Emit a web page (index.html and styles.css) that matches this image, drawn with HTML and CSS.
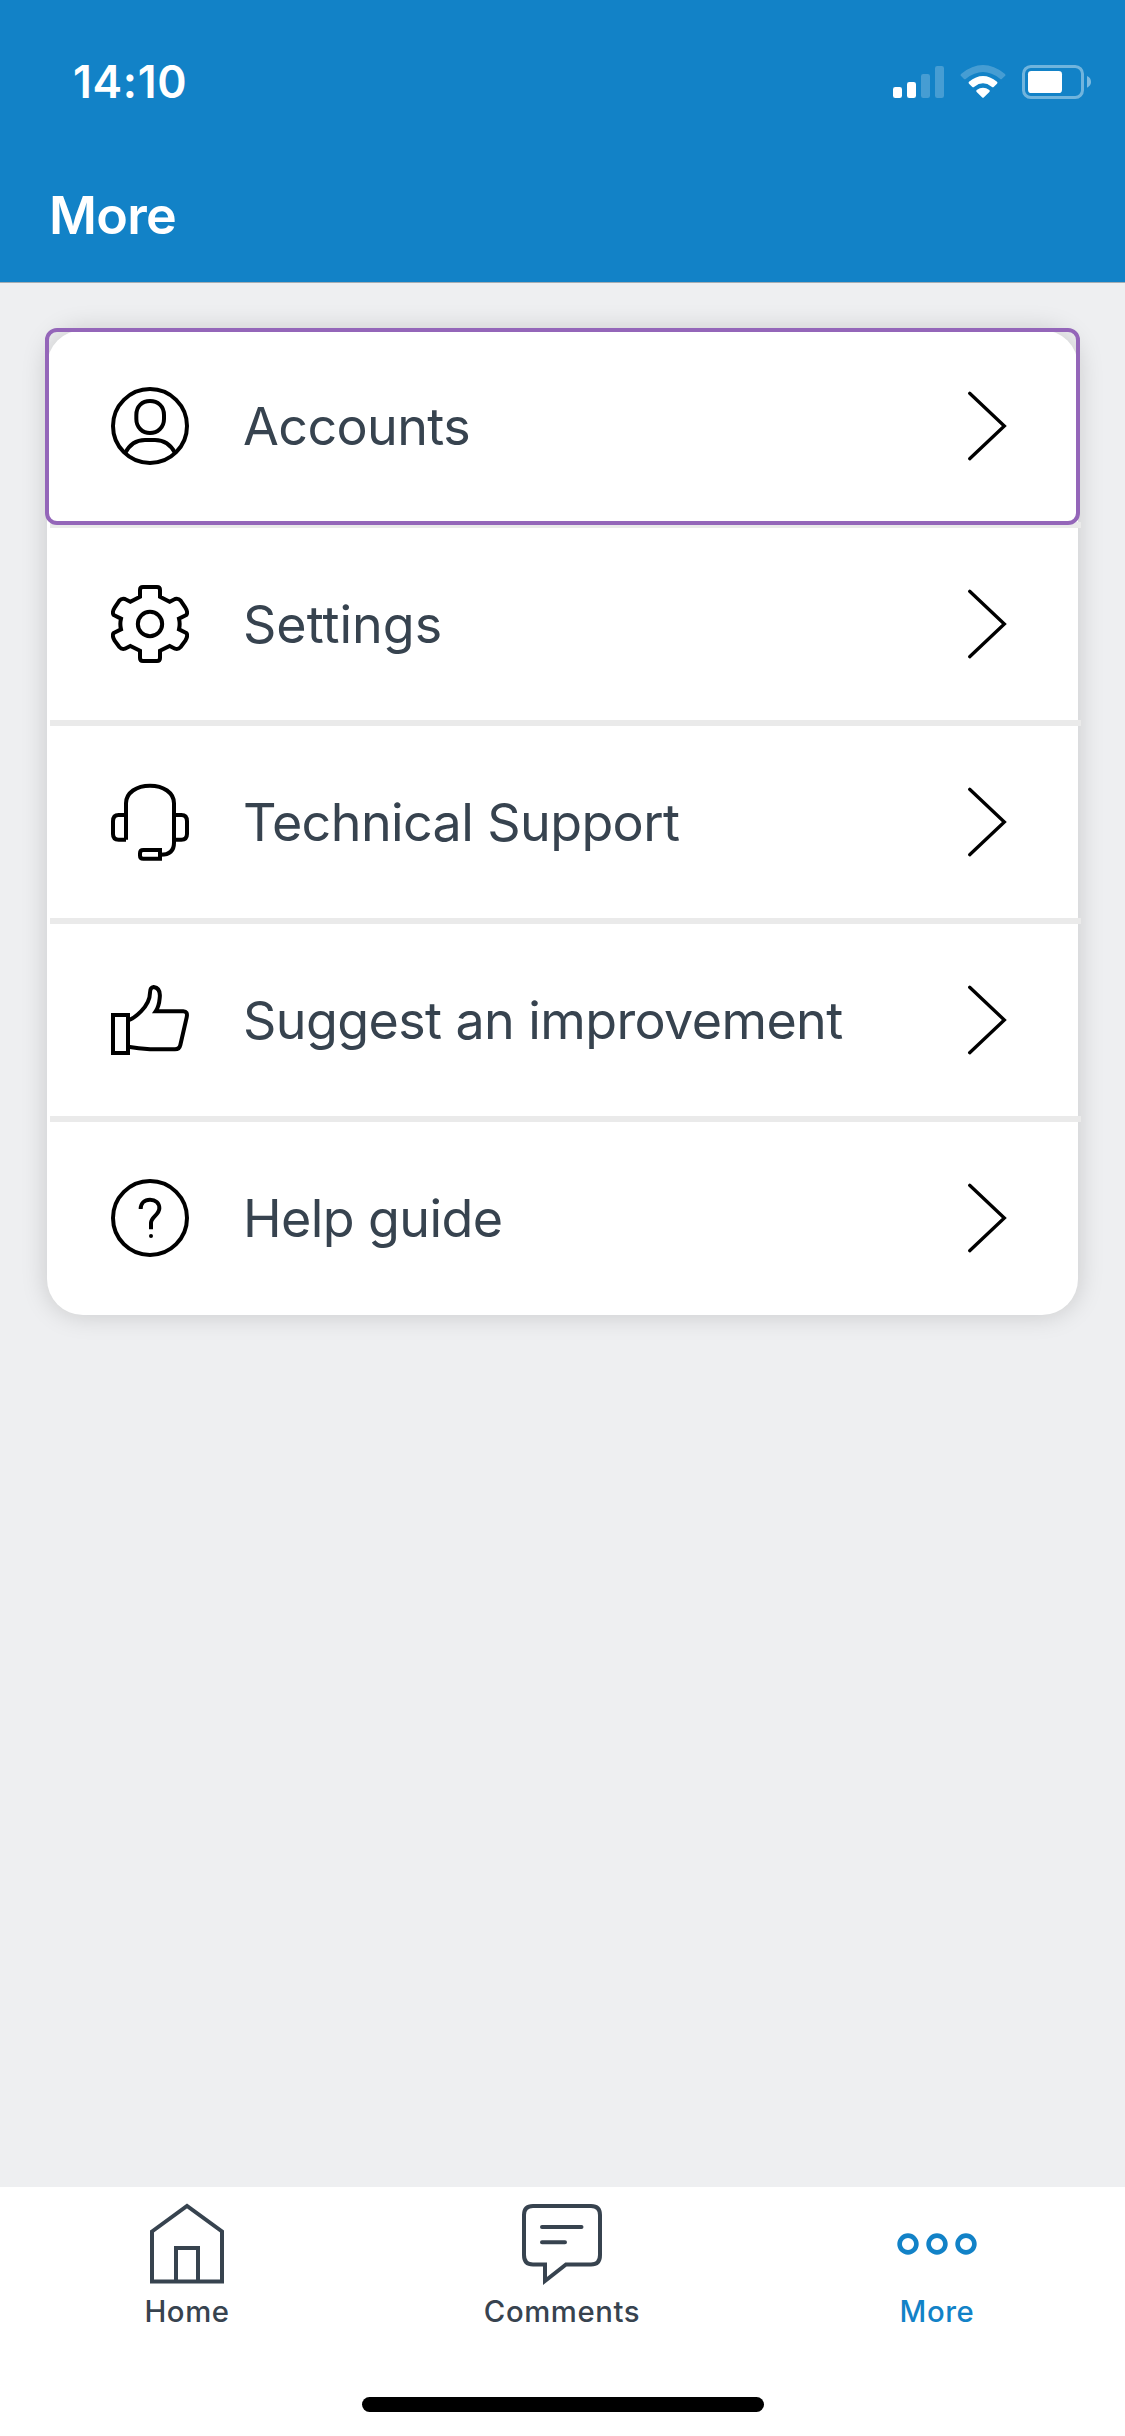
FILE: index.html
```html
<!DOCTYPE html>
<html lang="en">
<head>
<meta charset="utf-8">
<title>More</title>
<link rel="stylesheet" href="styles.css">
</head>
<body>
<header class="header">
  <div class="status">
    <span class="time">14:10</span>
    <svg class="indicators" viewBox="99 72 594 108" fill="#fff">
      <rect x="99" y="141" width="27" height="33" rx="7"/>
      <rect x="141" y="126" width="27" height="48" rx="7"/>
      <g opacity=".22">
        <rect x="183" y="102" width="27" height="72" rx="7"/>
        <rect x="225" y="78" width="27" height="96" rx="7"/>
        <path d="M304 101Q299 105 304 109L312 117Q315 119 318 116Q369 76 420 116Q423 119 426 116L434 109Q439 105 434 101Q369 49 304 101Z"/>
      </g>
      <path d="M327 125Q324 128 327 131L337 141Q340 143 343 140Q369 120 395 140Q398 143 401 141L411 131Q414 128 411 125Q369 91 327 125Z"/>
      <path d="M350 150Q347 153 350 156L366 172Q369 175 372 172L388 156Q391 153 388 150Q369 137 350 150Z"/>
      <rect x="490.500" y="79.500" width="177" height="93" rx="22" fill="none" stroke="#fff" stroke-width="9" opacity=".4"/>
      <path d="M681 108Q693 113 693 125.500Q693 138 681 143Z" opacity=".45"/>
      <rect x="504" y="93" width="102" height="66" rx="10"/>
    </svg>
  </div>
  <h1 class="title">More</h1>
</header>

<main class="content">
  <nav class="menu">
    <a class="row focused">
      <svg class="icon" viewBox="243 231 234 234">
        <circle cx="360" cy="348" r="111"/>
        <path d="M360 273C337 273 319 288 319 315V327C319 353 338 369 360 369S402 353 402 327V315C402 288 383 273 360 273Z"/>
        <path d="M285 430Q305 390 345 390H375Q415 390 436 430"/>
      </svg>
      <span class="label">Accounts</span>
      <svg class="chevron" viewBox="200 240 120 216"><path d="M208 250L312 348L208 446"/></svg>
    </a>
    <a class="row">
      <svg class="icon" viewBox="63 75 234 234">
        <path d="M150 110V90Q150 81 159 81H201Q210 81 210 90V110L239 125L255 117Q265 114 272 122L285 141Q295 157 289 165L267 176Q271 192 267 208L289 219Q295 227 286 242L272 261Q265 269 255 266L239 258L210 272V294Q210 303 201 303H159Q150 303 150 294V272L121 258L105 266Q95 269 88 261L74 242Q65 227 71 219L93 208Q89 192 93 176L71 165Q65 157 75 141L88 122Q95 114 105 117L121 125Z"/>
        <circle cx="180" cy="192" r="36.500"/>
      </svg>
      <span class="label loose">Settings</span>
      <svg class="chevron" viewBox="200 240 120 216"><path d="M208 250L312 348L208 446"/></svg>
    </a>
    <a class="row">
      <svg class="icon" viewBox="63 669 234 234">
        <path d="M108 839V730C108 698 140 677 180 677S252 698 252 730V848Q252 884 212 884"/>
        <path d="M108 765H86Q69 765 69 784V822Q69 839 86 839H108M252 765H274Q291 765 291 784V822Q291 839 274 839H252"/>
        <path d="M210 870H160Q150 870 150 880V887Q150 896 160 896H210Z"/>
      </svg>
      <span class="label">Technical Support</span>
      <svg class="chevron" viewBox="200 240 120 216"><path d="M208 250L312 348L208 446"/></svg>
    </a>
    <a class="row">
      <svg class="icon" viewBox="63 63 234 234">
        <path d="M69 165H114V279H69Z"/>
        <path d="M114 180Q129 178 153 154Q180 126 180 98Q180 82 191 81Q213 84 209 115Q207 139 197 154H280Q294 154 290 172L271 255Q268 268 255 268H180Q145 265 114 260"/>
      </svg>
      <span class="label">Suggest an improvement</span>
      <svg class="chevron" viewBox="200 240 120 216"><path d="M208 250L312 348L208 446"/></svg>
    </a>
    <a class="row">
      <svg class="icon" viewBox="63 657 234 234">
        <circle cx="180" cy="774" r="111"/>
        <path d="M152 747C152 729 164 719 180 719S208 729 208 745C208 765 183 770 183 789V808"/>
        <circle class="dot" cx="183" cy="828" r="6"/>
      </svg>
      <span class="label">Help guide</span>
      <svg class="chevron" viewBox="200 240 120 216"><path d="M208 250L312 348L208 446"/></svg>
    </a>
  </nav>
</main>

<footer class="tabbar">
  <nav class="tabs">
    <a class="tab">
      <svg class="tab-icon" viewBox="0 0 84 84"><path d="M7 29.500L42 4L77 29.500V79.500H7ZM31 79.500V46H53V79.500"/></svg>
      <span>Home</span>
    </a>
    <a class="tab">
      <svg class="tab-icon" viewBox="0 0 84 84"><path d="M13 4H71Q80 4 80 13V53Q80 62.500 71 62.500H46L25 79V62.500H13Q4 62.500 4 53V13Q4 4 13 4Z"/><path d="M22 25H61.500M22 40.300H45" stroke-linecap="round"/></svg>
      <span>Comments</span>
    </a>
    <a class="tab active">
      <svg class="tab-icon" viewBox="0 0 84 84"><circle cx="13" cy="42" r="8.400"/><circle cx="42" cy="42" r="8.400"/><circle cx="71" cy="42" r="8.400"/></svg>
      <span>More</span>
    </a>
  </nav>
  <div class="home-bar"></div>
</footer>
</body>
</html>
```
FILE: styles.css
```css
* { box-sizing: border-box; }

body {
  margin: 0;
  height: 2436px;
  display: flex;
  flex-direction: column;
  background: #eeeff1;
  color: #37434f;
  font-family: Inter, "Liberation Sans", sans-serif;
}

.header {
  height: 283px;
  background: #1282c7;
  border-bottom: 1px solid #a5adb3;
  color: #fff;
}

.status {
  display: flex;
  justify-content: space-between;
  align-items: center;
  height: 164px;
  padding: 0 34px 0 73px;
}

.time {
  font-size: 44.5px;
  font-weight: 600;
  letter-spacing: .7px;
}

.indicators { width: 198px; height: 36px; }

.title {
  margin: 0;
  padding: 20px 0 0 49px;
  font-size: 52px;
  line-height: 64px;
  font-weight: 600;
  letter-spacing: -.7px;
}

.content {
  flex: 1;
  padding: 47px 47px 0;
}

.menu {
  height: 985px;
  background: #fff;
  border-radius: 36px;
  box-shadow: 0 0 26px rgba(0, 0, 0, .17);
}

.row {
  position: relative;
  display: flex;
  align-items: center;
  height: 198px;
  padding: 0 71px 6px 64px;
}

/* The divider runs slightly past the card's right edge. */
.row:not(:last-child)::after {
  content: "";
  position: absolute;
  left: 3px;
  right: -3px;
  bottom: 0;
  height: 6px;
  background: #eaeaea;
}

.focused::before {
  content: "";
  position: absolute;
  z-index: 1;
  inset: -2px -2px 3px;
  border: 4px solid #9466b9;
  border-radius: 12px;
}

.icon, .chevron {
  flex: none;
  fill: none;
  stroke: #000;
  stroke-width: 12;
}

.icon { width: 78px; height: 78px; }

.icon .dot { fill: #000; stroke: none; }

.chevron {
  width: 40px;
  height: 72px;
  stroke-width: 10;
  stroke-linecap: round;
}

.label {
  flex: 1;
  padding: 2px 0 0 54px;
  font-size: 52px;
  line-height: 64px;
  letter-spacing: -.6px;
  white-space: nowrap;
}

.loose { letter-spacing: 0; }

.tabbar {
  height: 249px;
  background: #fff;
}

.tabs {
  display: grid;
  grid-template-columns: repeat(3, 375px);
  height: 210px;
}

.tab {
  display: flex;
  flex-direction: column;
  align-items: center;
  padding: 15px 1px 0 0;
  font-size: 29.300px;
  line-height: 36px;
  font-weight: 500;
  letter-spacing: .6px;
}

.tab-icon {
  width: 84px;
  height: 84px;
  margin-bottom: 8px;
  fill: none;
  stroke: currentColor;
  stroke-width: 4;
}

.active { color: #1282c7; }
.active .tab-icon { stroke-width: 4.600; }

.home-bar {
  width: 402px;
  height: 15px;
  margin: 0 auto;
  border-radius: 8px;
  background: #000;
}
```
